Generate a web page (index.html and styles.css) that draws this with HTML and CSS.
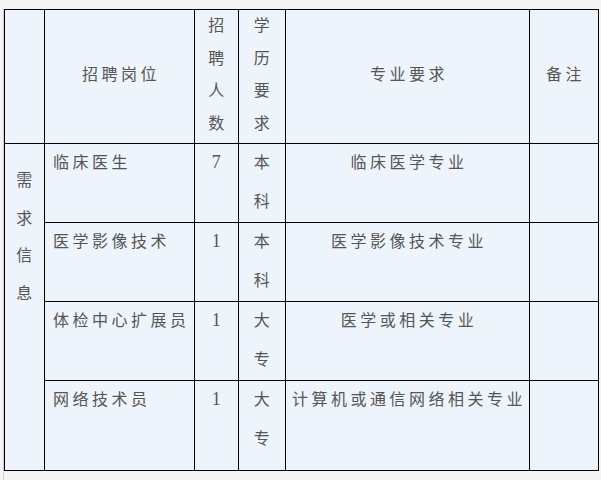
FILE: index.html
```html
<!DOCTYPE html>
<html lang="zh-CN">
<head>
<meta charset="utf-8">
<title>需求信息</title>
<link rel="stylesheet" href="styles.css">
</head>
<body>
<div class="frame">
  <table class="jobs">
    <colgroup>
      <col class="c-side">
      <col class="c-post">
      <col class="c-num">
      <col class="c-edu">
      <col class="c-major">
      <col class="c-note">
    </colgroup>
    <thead>
      <tr class="head">
        <th></th>
        <th>招聘岗位</th>
        <th class="stack">招<br>聘<br>人<br>数</th>
        <th class="stack">学<br>历<br>要<br>求</th>
        <th>专业要求</th>
        <th>备注</th>
      </tr>
    </thead>
    <tbody>
      <tr class="row">
        <td class="side" rowspan="4">需<br>求<br>信<br>息</td>
        <td class="post">临床医生</td>
        <td class="mid num">7</td>
        <td class="mid">本<br>科</td>
        <td class="mid">临床医学专业</td>
        <td></td>
      </tr>
      <tr class="row">
        <td class="post">医学影像技术</td>
        <td class="mid num">1</td>
        <td class="mid">本<br>科</td>
        <td class="mid">医学影像技术专业</td>
        <td></td>
      </tr>
      <tr class="row">
        <td class="post">体检中心扩展员</td>
        <td class="mid num">1</td>
        <td class="mid">大<br>专</td>
        <td class="mid">医学或相关专业</td>
        <td></td>
      </tr>
      <tr class="row last">
        <td class="post">网络技术员</td>
        <td class="mid num">1</td>
        <td class="mid">大<br>专</td>
        <td class="mid">计算机或通信网络相关专业</td>
        <td></td>
      </tr>
    </tbody>
  </table>
</div>
</body>
</html>
```

FILE: styles.css
```css
html, body {
  margin: 0;
  padding: 0;
  background: #f5f5f5;
}

.frame {
  margin: 9px 0 0 3px;
  border-left: 1px solid #cfcfcf;
  min-height: 480px;
}

.jobs {
  border-collapse: separate;
  border-spacing: 0;
  table-layout: fixed;
  width: 595px;
  border-top: 1px solid #000;
  border-left: 1px solid #000;
  background: #edf4fb;
  font-family: "Liberation Serif", "Noto Sans CJK SC", serif;
  font-size: 16px;
  color: #555;
}

.c-side { width: 40px; }
.c-post { width: 150px; }
.c-num { width: 44px; }
.c-edu { width: 47px; }
.c-major { width: 244px; }
.c-note { width: 69px; }

.jobs th,
.jobs td {
  box-sizing: border-box;
  border-right: 1px solid #000;
  border-bottom: 1px solid #000;
  padding: 0;
  font-weight: normal;
  letter-spacing: 3.5px;
}

.head {
  height: 133px;
}

.head th {
  text-align: center;
  vertical-align: middle;
  line-height: 32.5px;
  padding: 0 0 3px 3px;
}

.row {
  height: 79px;
}

.row.last {
  height: 90px;
}

.row td {
  vertical-align: top;
  line-height: 38.5px;
}

.row .post {
  text-align: left;
  padding-left: 8px;
}

.row .mid {
  text-align: center;
  padding-left: 3px;
}

.row .num {
  font-size: 18px;
  line-height: 36px;
}

.row .side {
  text-align: center;
  padding: 18px 0 0 3px;
  line-height: 37.7px;
}
```
